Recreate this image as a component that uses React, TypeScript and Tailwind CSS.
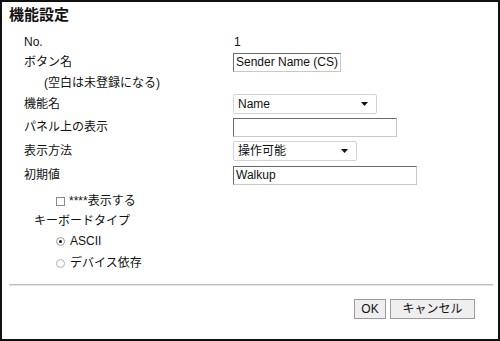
const FONT = { fontFamily: '"Liberation Sans", Arial, "Noto Sans CJK JP", sans-serif' };

function Arrow() {
  return (
    <svg width="7" height="4" viewBox="0 0 7 4" className="shrink-0">
      <path d="M0 0h7L3.5 4z" fill="#111" />
    </svg>
  );
}

function TextBox({ value, width }: { value: string; width: string }) {
  return (
    <div
      className={`${width} flex h-[19px] items-center border border-t-[#6b6b6b] border-l-[#6b6b6b] border-r-[#c8c8c8] border-b-[#c8c8c8] bg-white pl-[2px] text-[12px] leading-none text-[#111] overflow-hidden whitespace-nowrap`}
    >
      {value}
    </div>
  );
}

function Select({ value, width }: { value: string; width: string }) {
  return (
    <div
      className={`${width} flex h-[20px] items-center justify-between rounded-[2px] border border-[#d4d4d4] bg-white pl-[4px] pr-[8px] text-[12px] leading-none text-[#111]`}
    >
      <span>{value}</span>
      <Arrow />
    </div>
  );
}

function Row({
  label,
  children,
  className = "",
}: {
  label: string;
  children?: React.ReactNode;
  className?: string;
}) {
  return (
    <div className={`flex h-[20px] items-center ${className}`}>
      <div className="w-[209px] text-[12px] text-[#111]">{label}</div>
      {children}
    </div>
  );
}

export default function App() {
  return (
    <div className="h-[341px] w-[500px] bg-white" style={FONT}>
      <div className="flex h-full w-full flex-col border-2 border-[#111] pt-[3px] pl-[22px] pr-[6px]">
        <div className="-ml-[15px] flex h-[20px] items-center text-[15px] font-bold text-[#111]">
          機能設定
        </div>

        <Row label="No." className="mt-[7px]">
          <span className="pl-[1px] text-[12px] text-[#111]">1</span>
        </Row>
        <Row label="ボタン名">
          <TextBox value="Sender Name (CS)" width="w-[108px]" />
        </Row>
        <div className="mt-[1px] flex h-[20px] items-center pl-[20px] text-[12px] text-[#111]">
          (空白は未登録になる)
        </div>
        <Row label="機能名" className="mt-[1px]">
          <Select value="Name" width="w-[144px]" />
        </Row>
        <Row label="パネル上の表示" className="mt-[3px]">
          <TextBox value="" width="w-[164px]" />
        </Row>
        <Row label="表示方法" className="mt-[4px]">
          <Select value="操作可能" width="w-[124px]" />
        </Row>
        <Row label="初期値" className="mt-[4px]">
          <TextBox value="Walkup" width="w-[184px]" />
        </Row>

        <div className="mt-[6px] flex h-[20px] items-center pl-[32px] text-[12px] text-[#111]">
          <span className="mr-[4px] h-[9px] w-[9px] border border-[#8a8a8a] bg-white" />
          ****表示する
        </div>
        <div className="flex h-[20px] items-center pl-[10px] text-[12px] text-[#111]">
          キーボードタイプ
        </div>
        <div className="flex h-[20px] items-center pl-[32px] text-[12px] text-[#111]">
          <span className="mr-[5px] flex h-[9px] w-[9px] items-center justify-center rounded-full border border-[#9a9a9a] bg-white">
            <span className="h-[3px] w-[3px] rounded-full bg-[#111]" />
          </span>
          ASCII
        </div>
        <div className="mt-[2px] flex h-[20px] items-center pl-[32px] text-[12px] text-[#111]">
          <span className="mr-[5px] h-[9px] w-[9px] rounded-full border border-[#b0b0b0] bg-white" />
          デバイス依存
        </div>

        <div className="-ml-[15px] mt-[11px] h-[2px] w-[484px] border-t border-t-[#bdbdbd] border-b border-b-[#e6e6e6]" />

        <div className="mt-[13px] flex justify-end gap-[4px] pr-[17px]">
          <div className="flex h-[20px] w-[32px] items-center justify-center border border-[#9c9c9c] bg-[#efefef] text-[12px] text-[#111]">
            OK
          </div>
          <div className="flex h-[20px] w-[85px] items-center justify-center border border-[#9c9c9c] bg-[#efefef] text-[12px] text-[#111]">
            キャンセル
          </div>
        </div>
      </div>
    </div>
  );
}
